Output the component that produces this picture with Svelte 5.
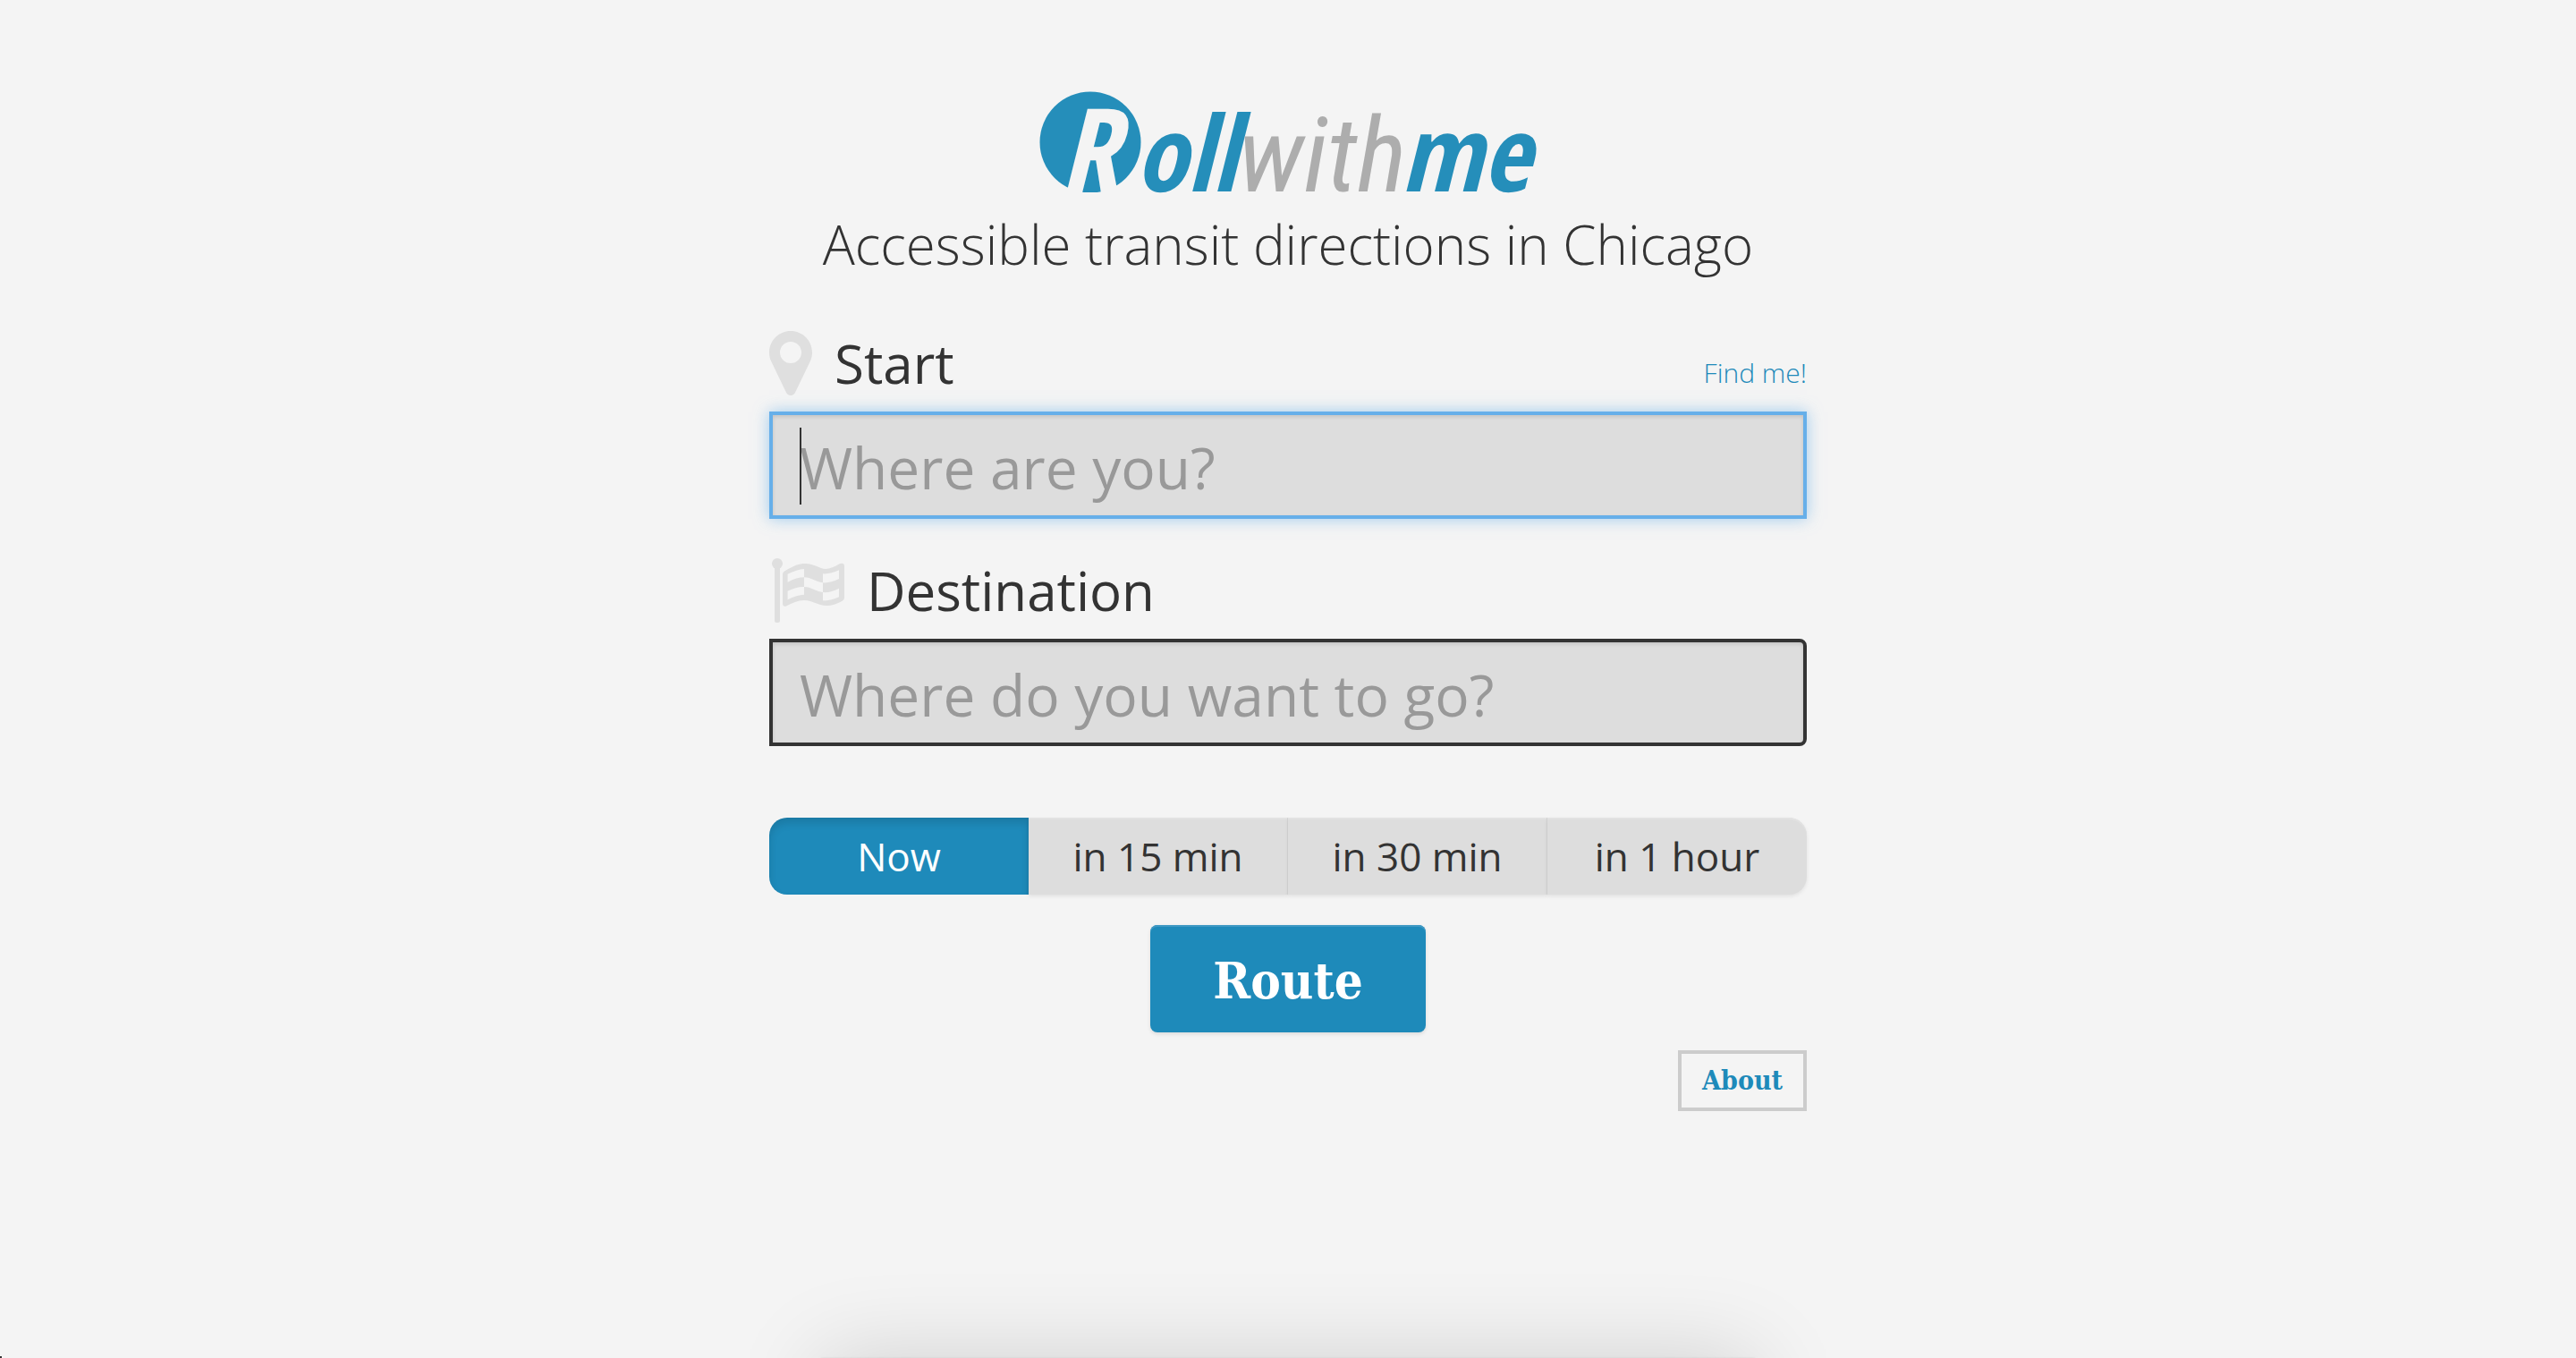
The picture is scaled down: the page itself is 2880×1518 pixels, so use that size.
<script>
  let start = $state('');
  let destination = $state('');
  let when = $state('now');

  const times = [
    { value: 'now', label: 'Now' },
    { value: '15', label: 'in 15 min' },
    { value: '30', label: 'in 30 min' },
    { value: '60', label: 'in 1 hour' }
  ];
</script>

<div class="page">
  <main>
    <header>
      <svg class="logo" viewBox="0 0 560 120" role="img" aria-label="Rollwithme">
        <defs>
          <clipPath id="disc"><rect width="130" height="115" /></clipPath>
        </defs>
        <g clip-path="url(#disc)">
          <circle cx="59" cy="59" r="56.5" fill="#258eba" />
          <text class="initial" x="24" y="116">R</text>
        </g>
        <text class="bold" x="109" y="114">oll</text>
        <text class="thin" x="224" y="114">with</text>
        <text class="bold" x="406" y="114">me</text>
      </svg>
      <h1>Accessible transit directions in Chicago</h1>
    </header>

    <form onsubmit={(e) => e.preventDefault()}>
      <div class="label-row">
        <label for="start">
          <svg class="pin" viewBox="0 0 48 72" aria-hidden="true">
            <path fill-rule="evenodd" d="M24 0C37.300 0 48 10.700 48 24c0 4-.8 6.800-2 9.500L29 68.800c-2 4.300-8 4.300-10 0L2 33.500C.8 30.800 0 28 0 24 0 10.700 10.700 0 24 0zM24 12a12 12 0 1 0 0 24 12 12 0 0 0 0-24z" />
          </svg>
          <span>Start</span>
        </label>
        <a href="#find">Find me!</a>
      </div>
      <div class="field">
        <input id="start" class="active" type="text" placeholder="Where are you?" bind:value={start} />
        <span class="caret"></span>
      </div>

      <div class="label-row second">
        <label for="destination">
          <svg class="flag" viewBox="-3 0 84 72" aria-hidden="true">
            <circle cx="6" cy="6" r="6" />
            <path d="M3 6h6v64q0 2-2 2H5q-2 0-2-2z" />
            <path fill-rule="evenodd" d="M12 18q0-2.500 2-3.500C25 8 30 6 37 6c11 0 16 6 23 6 5 0 10-2.500 16-6q5-1.500 5 3v35q0 2.500-2 3.500C72 51.500 67 53 61 53c-10 0-15-6-25-6-7 0-13 3-20 6.500q-4 1.500-4-3.500zM17.600 17.700v9Q28 21.300 36 21.300V12Q28 12.500 17.600 17.700zM57 17.300v10Q65 28 75 23v-9.700Q65 18 57 17.300zM36 21.300V32c8 0 13 5 21 6V27.300c-8-1-13-6-21-6zM17.600 36.700v9.600Q28 41 36 40.700V32Q28 31.500 17.600 36.700zM57 38v9.300Q65 48 75 43.300v-9.600Q65 39 57 38z" />
          </svg>
          <span>Destination</span>
        </label>
      </div>
      <div class="field">
        <input id="destination" type="text" placeholder="Where do you want to go?" bind:value={destination} />
      </div>

      <div class="times" role="group" aria-label="Departure time">
        {#each times as time}
          <button
            type="button"
            class:selected={when === time.value}
            aria-pressed={when === time.value}
            onclick={() => (when = time.value)}>{time.label}</button>
        {/each}
      </div>

      <button class="route" type="submit">Route</button>
    </form>

    <a class="about" href="#about">About</a>
  </main>
  <footer></footer>
  <span class="corner"></span>
</div>

<style>
  :global(body) {
    background: #f4f4f4;
  }

  .page {
    position: relative;
    box-sizing: border-box;
    display: flex;
    flex-direction: column;
    min-height: 100vh;
    overflow: hidden;
    color: #333;
    font-family: 'Open Sans', 'Noto Sans', sans-serif;
  }

  main {
    box-sizing: border-box;
    display: flex;
    flex-direction: column;
    width: 100%;
    max-width: 1160px;
    margin: 0 auto;
    padding-top: 100px;
  }

  header {
    display: flex;
    flex-direction: column;
    align-items: center;
  }

  .logo {
    width: 560px;
    height: 120px;
    overflow: visible;
  }

  .initial,
  .bold {
    font-family: 'Open Sans Condensed', 'Open Sans', sans-serif;
    font-style: italic;
    font-weight: 700;
    font-size: 117px;
    fill: #258eba;
  }

  .initial {
    font-size: 132px;
    fill: #f4f4f4;
  }

  .thin {
    font-family: 'Roboto Condensed', Roboto, sans-serif;
    font-style: italic;
    font-weight: 400;
    font-size: 117px;
    fill: #adadad;
  }

  h1 {
    margin: 12px 0 0;
    font-weight: 300;
    font-size: 60px;
    line-height: 82px;
  }

  form {
    display: flex;
    flex-direction: column;
  }

  .label-row {
    box-sizing: border-box;
    display: flex;
    justify-content: space-between;
    align-items: center;
    height: 100px;
    margin-top: 46px;
    padding-bottom: 8px;
  }

  .label-row.second {
    margin-top: 34px;
  }

  label {
    display: flex;
    align-items: center;
    gap: 25px;
    font-size: 60px;
    line-height: 80px;
  }

  .pin {
    width: 48px;
    height: 72px;
    fill: #dfdfdf;
  }

  .flag {
    width: 84px;
    height: 72px;
    fill: #dfdfdf;
  }

  a {
    color: #1e8aba;
    text-decoration: none;
  }

  .label-row a {
    padding-top: 22px;
    font-weight: 300;
    font-size: 30px;
    line-height: 40px;
  }

  .field {
    position: relative;
    display: flex;
  }

  input {
    box-sizing: border-box;
    width: 100%;
    height: 120px;
    padding: 4px 30px 0;
    border: 4px solid #333;
    border-radius: 0 8px 8px 0;
    outline: none;
    background: #ddd;
    box-shadow: inset 0 2px 4px rgba(0, 0, 0, 0.12);
    color: #333;
    font-family: inherit;
    font-size: 64px;
  }

  input::placeholder {
    color: #999;
    opacity: 1;
  }

  input.active {
    border-color: #66afe9;
    border-radius: 0;
    box-shadow: inset 0 2px 4px rgba(0, 0, 0, 0.12), 0 0 16px rgba(102, 175, 233, 0.6);
  }

  .caret {
    position: absolute;
    top: 18px;
    left: 34px;
    width: 2px;
    height: 86px;
    background: #333;
  }

  .times {
    display: grid;
    grid-template-columns: repeat(4, 1fr);
    margin-top: 80px;
  }

  .times button {
    height: 86px;
    padding: 0;
    border: 0;
    border-right: 1px solid #d4d4d4;
    background: #ddd;
    box-shadow: inset 0 2px 0 #e2e2e2, 0 2px 4px rgba(0, 0, 0, 0.08);
    color: #333;
    font-family: inherit;
    font-size: 44px;
    line-height: 60px;
  }

  .times button:first-child {
    border-radius: 20px 0 0 20px;
  }

  .times button:last-child {
    border-right: 0;
    border-radius: 0 20px 20px 0;
  }

  .times button.selected {
    border-right: 0;
    background: #1e8aba;
    box-shadow: inset 0 6px 10px rgba(0, 0, 0, 0.12);
    color: #fff;
  }

  .route {
    align-self: center;
    height: 120px;
    margin-top: 34px;
    padding: 4px 70px 0;
    border: 0;
    border-radius: 8px;
    background: #1e8aba;
    box-shadow: inset 0 2px 0 #4099c4, 0 2px 4px rgba(0, 0, 0, 0.1);
    color: #fff;
    font-family: 'DejaVu Serif Condensed', 'DejaVu Serif', serif;
    font-weight: 700;
    font-size: 56px;
  }

  .about {
    align-self: flex-end;
    margin-top: 20px;
    padding: 0 23px;
    border: 4px solid #ccc;
    font-family: 'DejaVu Serif Condensed', 'DejaVu Serif', serif;
    font-weight: 700;
    font-size: 30px;
    line-height: 60px;
  }

  footer {
    flex: none;
    width: 100%;
    max-width: 1044px;
    height: 200px;
    margin: auto auto -200px;
    box-shadow: 0 0 100px rgba(0, 0, 0, 0.15), 0 0 2px rgba(0, 0, 0, 0.1);
  }

  .corner {
    position: absolute;
    bottom: 0;
    left: 0;
    width: 2px;
    height: 2px;
    background: #333;
  }
</style>
